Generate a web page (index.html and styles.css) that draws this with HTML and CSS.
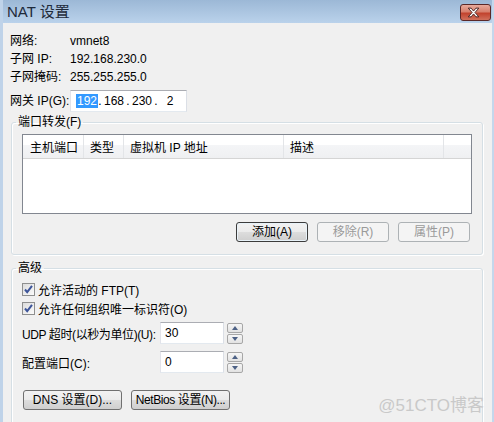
FILE: index.html
```html
<!DOCTYPE html>
<html lang="zh">
<head>
    <meta charset="UTF-8">
    <title>NAT 设置</title>
    <link rel="stylesheet" href="styles.css">
</head>
<body>
    <div class="window">
        <div class="titlebar">
            <span class="title">NAT 设置</span>
            <span class="close-btn">
                <svg width="31" height="17" viewBox="0 0 31 17">
                    <path d="M8.5 4h3l2.5 3 2.5-3h3l-4 4.5 4 4.5h-3l-2.5-3-2.5 3h-3l4-4.5z" fill="#fff" stroke="#4a2323" stroke-width="1" stroke-linejoin="round"/>
                </svg>
            </span>
        </div>

        <div class="content">
            <!-- 网络信息 -->
            <div class="info">
                <span>网络:</span><span>vmnet8</span>
                <span>子网 IP:</span><span>192.168.230.0</span>
                <span>子网掩码:</span><span>255.255.255.0</span>
                <span class="gw-label">网关 IP(G):</span>
                <div class="ip-box">
                    <span class="ip-part"><span class="sel">192</span></span>
                    <span class="ip-dot">.</span>
                    <span class="ip-part">168</span>
                    <span class="ip-dot">.</span>
                    <span class="ip-part">230</span>
                    <span class="ip-dot">.</span>
                    <span class="ip-part">2</span>
                </div>
            </div>

            <!-- 端口转发 -->
            <fieldset class="group group-forward">
                <legend>端口转发(F)</legend>
                <div class="list">
                    <div class="list-head">
                        <span class="col col-port">主机端口</span>
                        <span class="col col-type">类型</span>
                        <span class="col col-ip">虚拟机 IP 地址</span>
                        <span class="col col-desc">描述</span>
                        <span class="col col-rest"></span>
                    </div>
                </div>
                <div class="btn-row">
                    <button class="btn btn-default">添加(A)</button>
                    <button class="btn" disabled>移除(R)</button>
                    <button class="btn" disabled>属性(P)</button>
                </div>
            </fieldset>

            <!-- 高级 -->
            <fieldset class="group group-adv">
                <legend>高级</legend>
                <div class="check-row first">
                    <span class="checkbox"><svg width="11" height="11" viewBox="0 0 11 11"><path d="M2 5.5l2.2 2.6L9 1.8" fill="none" stroke="#3d559a" stroke-width="2"/></svg></span>
                    <span>允许活动的 FTP(T)</span>
                </div>
                <div class="check-row">
                    <span class="checkbox"><svg width="11" height="11" viewBox="0 0 11 11"><path d="M2 5.5l2.2 2.6L9 1.8" fill="none" stroke="#3d559a" stroke-width="2"/></svg></span>
                    <span>允许任何组织唯一标识符(O)</span>
                </div>
                <div class="field-row udp">
                    <span class="field-label tight">UDP 超时(以秒为单位)(U):</span>
                    <span class="text-box">30</span>
                    <span class="spinner">
                        <span class="spin spin-up"></span>
                        <span class="spin spin-down"></span>
                    </span>
                </div>
                <div class="field-row port">
                    <span class="field-label">配置端口(C):</span>
                    <span class="text-box">0</span>
                    <span class="spinner">
                        <span class="spin spin-up"></span>
                        <span class="spin spin-down"></span>
                    </span>
                </div>
                <div class="bottom-btns">
                    <button class="btn btn-wide">DNS 设置(D)...</button>
                    <button class="btn btn-wide tight">NetBios 设置(N)...</button>
                </div>
            </fieldset>
        </div>

        <div class="watermark">@51CTO博客</div>
    </div>
</body>
</html>
```

FILE: styles.css
```css
* {
    box-sizing: border-box;
}
body {
    margin: 0;
    font-family: "Liberation Sans", "Noto Sans CJK SC", sans-serif;
    font-size: 12px;
    color: #000;
    overflow: hidden;
}
.window {
    position: relative;
    height: 422px;
    background: #f0f0f0;
    border-left: 3px solid #bfd3e9;
    border-right: 2px solid #c4d7ec;
    overflow: hidden;
}
.titlebar {
    height: 23px;
    display: flex;
    justify-content: space-between;
    padding: 0 1px 0 4px;
    background: linear-gradient(#9cb8d6, #bad2eb);
}
.title {
    font-size: 15px;
    line-height: 23px;
    color: #1e2a3a;
}
.close-btn {
    margin-top: 4px;
    width: 31px;
    height: 17px;
    border: 1px solid #5a2828;
    border-radius: 3px;
    background: linear-gradient(#e8aa9c, #d7806d 45%, #c2432e 55%, #d0705c);
    display: flex;
    align-items: center;
    justify-content: center;
}
.close-btn svg {
    display: block;
    margin: -1px 0 0 -1px;
}
.content {
    padding: 9px 9px 0 7px;
}
.tight {
    letter-spacing: -0.4px;
}

/* 网络信息 */
.info {
    display: grid;
    grid-template-columns: 60px 1fr;
    grid-template-rows: 18px 18px 18px 26px;
    align-items: center;
    line-height: 18px;
}
.gw-label {
    align-self: end;
    line-height: 22px;
}
.ip-box {
    align-self: end;
    width: 117px;
    height: 22px;
    display: flex;
    align-items: center;
    padding-left: 5px;
    background: #fff;
    border: 1px solid;
    border-color: #abadb3 #dbdfe6 #e3e9ef #e2e3ea;
}
.ip-part {
    width: 20px;
    text-align: center;
    line-height: 14px;
}
.ip-dot {
    width: 8px;
    text-align: center;
}
.sel {
    background: #3399ff;
    color: #fff;
    padding: 0 1px;
}

/* 分组框 */
.group {
    margin: 3px 0 0 1px;
    padding: 0 10px 12px;
    border: 1px solid #d5dfe5;
    border-radius: 3px;
    box-shadow: inset 1px 1px 0 #fff, 1px 1px 0 #fff;
    min-width: 0;
}
.group legend {
    margin-left: -6px;
    padding: 0 2px;
    line-height: 14px;
}
.list {
    margin-top: 5px;
    height: 80px;
    border: 1px solid #828790;
    background: #fff;
}
.list-head {
    display: flex;
    height: 24px;
    border-bottom: 1px solid #d5d5d5;
    background: linear-gradient(#fff 45%, #f4f5f7 45%, #eff0f2);
}
.col {
    padding: 5px 0 0 6px;
    line-height: 16px;
    border-right: 1px solid #e3e5e8;
}
.col-port {
    width: 61px;
    padding-left: 7px;
}
.col-type {
    width: 40px;
}
.col-ip {
    width: 160px;
}
.col-desc {
    width: 160px;
}
.col-rest {
    flex: 1;
    border-right: none;
}
.btn-row {
    display: flex;
    justify-content: flex-end;
    gap: 9px;
    margin: 8px 2px 0 0;
}
.btn {
    width: 72px;
    height: 20px;
    padding: 0;
    font: inherit;
    line-height: 18px;
    white-space: nowrap;
    color: #000;
    border: 1px solid #707070;
    border-radius: 3px;
    background: linear-gradient(#f2f2f2, #ebebeb 50%, #dddddd 50%, #cfcfcf);
}
.btn-default {
    border-color: #3c3c3c;
    box-shadow: inset 0 0 0 1px #e8f2f8;
}
.btn:disabled {
    color: #9a9a9a;
    border-color: #adb2b5;
    background: #f4f4f4;
}

/* 高级 */
.group-adv {
    margin-top: 6px;
    padding-bottom: 20px;
}
.check-row {
    display: flex;
    align-items: center;
    gap: 3px;
    height: 19px;
}
.check-row.first {
    margin-top: 5px;
}
.checkbox {
    width: 13px;
    height: 13px;
    border: 1px solid #8e8f8f;
    background: linear-gradient(135deg, #dcdcdc, #fbfbfb);
    display: flex;
    align-items: center;
    justify-content: center;
}
.field-row {
    display: flex;
    align-items: center;
}
.field-row.udp {
    margin-top: 4px;
}
.field-row.port {
    margin-top: 7px;
}
.field-label {
    width: 138px;
    flex-shrink: 0;
    white-space: nowrap;
}
.text-box {
    width: 64px;
    height: 22px;
    padding-left: 4px;
    line-height: 20px;
    background: #fff;
    border: 1px solid;
    border-color: #abadb3 #dbdfe6 #e3e9ef #e2e3ea;
}
.spinner {
    margin-left: 3px;
    width: 16px;
    height: 22px;
    padding-top: 1px;
    display: flex;
    flex-direction: column;
    gap: 1px;
}
.spin {
    height: 10px;
    border: 1px solid #a7a7a7;
    border-radius: 2px;
    background: linear-gradient(#f6f6f6, #e2e2e2);
    display: flex;
    align-items: center;
    justify-content: center;
}
.spin-up::after {
    content: "";
    border: 3px solid transparent;
    border-top: none;
    border-bottom: 4px solid #4d6185;
}
.spin-down::after {
    content: "";
    border: 3px solid transparent;
    border-bottom: none;
    border-top: 4px solid #4d6185;
}
.bottom-btns {
    display: flex;
    gap: 9px;
    margin: 17px 0 0 1px;
}
.btn-wide {
    width: 99px;
}
.watermark {
    position: absolute;
    right: 8px;
    bottom: 6px;
    font-size: 17px;
    color: #c9c9c9;
}
```
